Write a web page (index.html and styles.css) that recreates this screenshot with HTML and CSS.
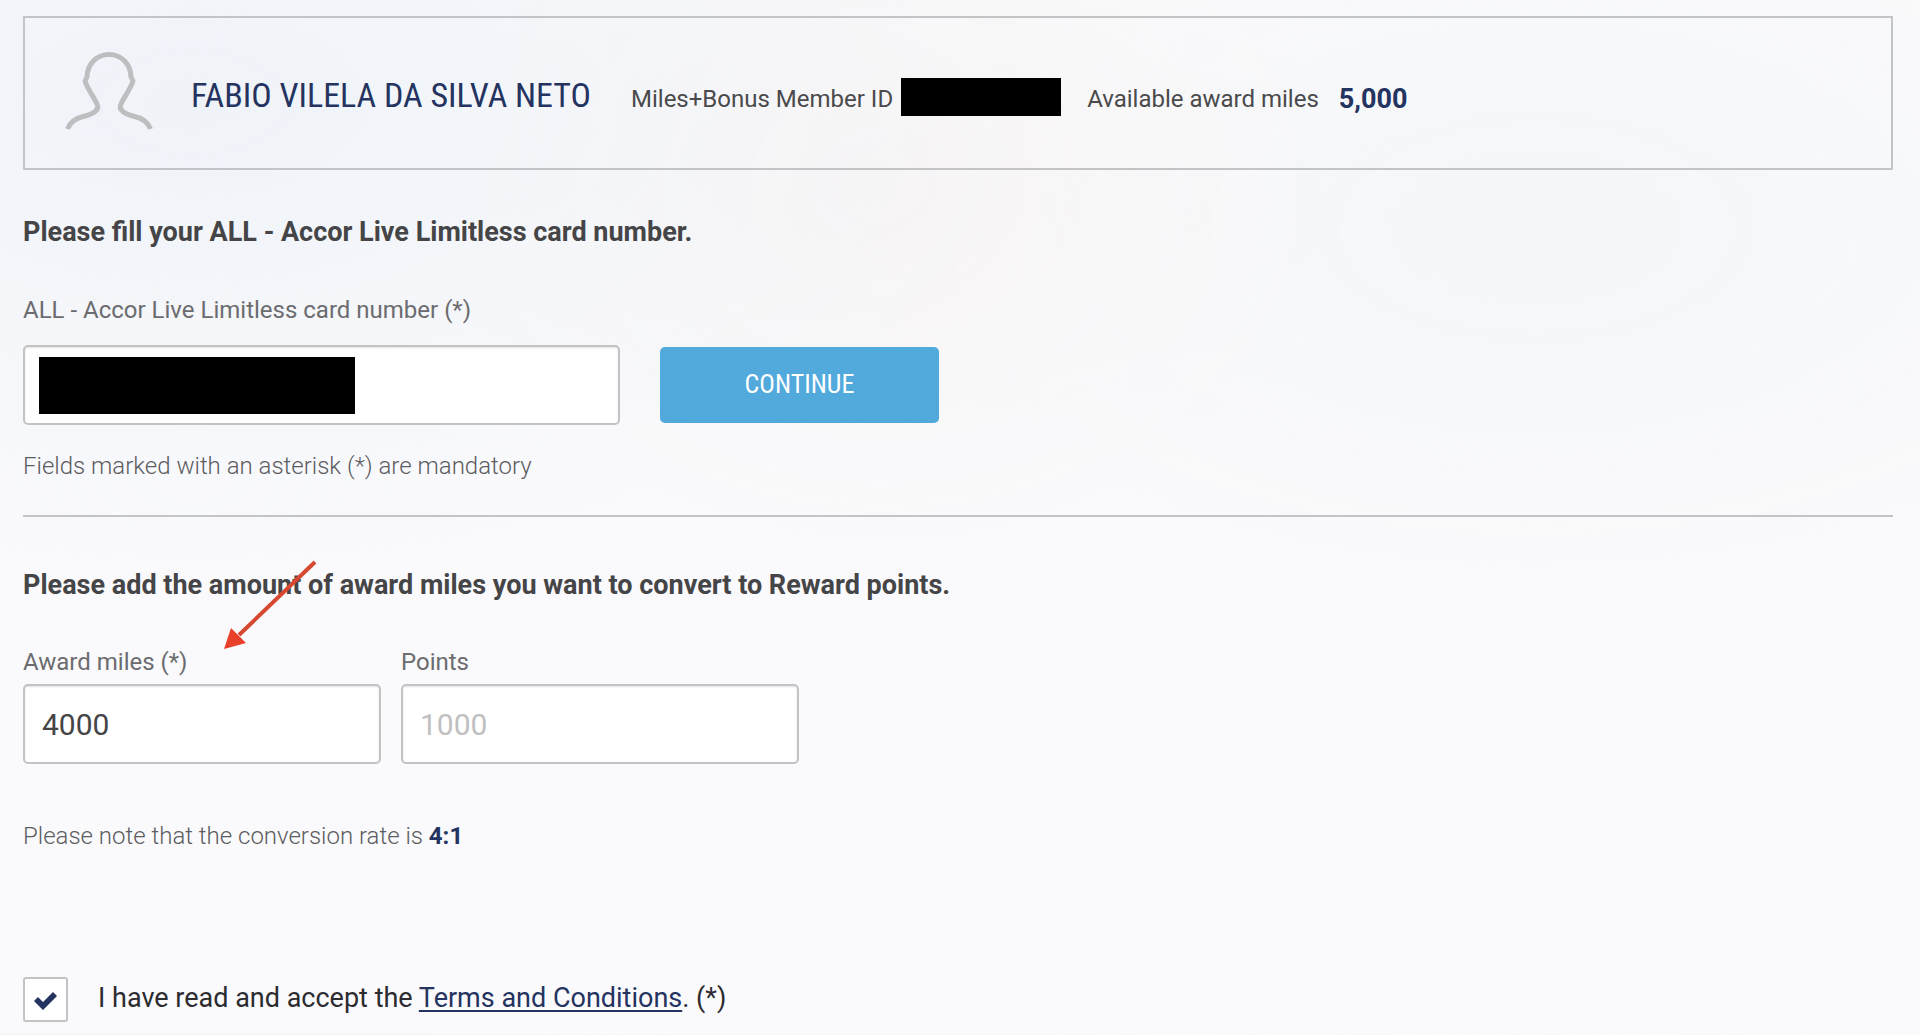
FILE: index.html
```html
<!DOCTYPE html>
<html lang="en">
<head>
    <meta charset="UTF-8">
    <meta name="viewport" content="width=device-width, initial-scale=1.0">
    <title>Convert award miles</title>
    <link rel="stylesheet" href="styles.css">
</head>
<body>
    <!-- Member info -->
    <header class="member-box">
        <svg class="avatar" viewBox="0 0 88 80" fill="none" stroke="#bdbebf" stroke-width="5" stroke-linejoin="round">
            <path d="M2.500 77C5 70 11 66 20 64C28 62 35 58 32 52C29 45 23 38 20 29L22 25C22 13 31 2.500 44 2.500C57 2.500 66 13 66 25L68 29C65 38 59 45 56 52C53 58 60 62 68 64C77 66 83 70 85.500 77"/>
        </svg>
        <h1 class="member-name">FABIO VILELA DA SILVA NETO</h1>
        <span class="member-label">Miles+Bonus Member ID</span>
        <span class="redacted-id"></span>
        <span class="member-label">Available award miles</span>
        <strong class="member-miles">5,000</strong>
    </header>

    <form>
        <!-- Card number -->
        <section class="card-section">
            <h2>Please fill your ALL - Accor Live Limitless card number.</h2>
            <label for="card_number">ALL - Accor Live Limitless card number (*)</label>
            <div class="card-row">
                <div class="card-field">
                    <input type="text" id="card_number">
                    <span class="redacted-card"></span>
                </div>
                <button type="button" class="btn-continue">CONTINUE</button>
            </div>
            <p class="note">Fields marked with an asterisk (*) are mandatory</p>
        </section>

        <!-- Miles conversion -->
        <section class="miles-section">
            <h2>Please add the amount of award miles you want to convert to Reward points.</h2>
            <svg class="arrow" viewBox="0 0 100 96">
                <path d="M95 6L19 79" stroke="#d64830" stroke-width="4"/>
                <path d="M4 93L11 72L26 87Z" fill="#e8402a"/>
            </svg>
            <div class="miles-row">
                <div class="field field-miles">
                    <label for="award_miles">Award miles (*)</label>
                    <input type="text" id="award_miles" value="4000">
                </div>
                <div class="field field-points">
                    <label for="points">Points</label>
                    <input type="text" id="points" placeholder="1000">
                </div>
            </div>
            <p class="note">Please note that the conversion rate is <strong>4:1</strong></p>
        </section>

        <!-- Terms -->
        <div class="terms">
            <span class="check-box">
                <input type="checkbox" id="terms" checked>
                <svg class="check-mark" viewBox="0 0 24 20">
                    <path d="M0 10L4 6L9 11L19 1L23 5L9 19Z" fill="#24335f"/>
                </svg>
            </span>
            <label for="terms">I have read and accept the <a href="#">Terms and Conditions</a>. (*)</label>
        </div>
    </form>
</body>
</html>
```
FILE: styles.css
```css
/* General styling */
* {
    box-sizing: border-box;
}

body {
    font-family: Roboto, "Liberation Sans", sans-serif;
    font-size: 24px;
    line-height: 32px;
    color: #4a4a4c;
    margin: 0;
    padding: 16px 27px 12px 23px;
    background-color: #fafafc;
    background-image:
        radial-gradient(ellipse at 10% 10%, #eff3f8 0, transparent 35%),
        radial-gradient(ellipse at 46% 18%, #f8f5f5 0, transparent 30%),
        radial-gradient(ellipse at 80% 22%, #f4f6f8 0, transparent 30%);
}

h1,
h2,
p {
    margin: 0;
}

h2 {
    font-size: 27px;
    font-weight: 700;
    color: #454547;
}

label {
    color: #6c6c6f;
}

input[type="text"] {
    display: block;
    width: 100%;
    height: 80px;
    padding: 0 17px;
    border: 2px solid #c3c3c5;
    border-radius: 5px;
    background-color: #fff;
    box-shadow: inset 0 1px 2px rgba(0, 0, 0, 0.12);
    font-family: inherit;
    font-size: 30px;
    color: #454547;
}

input::placeholder {
    color: #bfbfc1;
}

/* Member info */
.member-box {
    display: flex;
    align-items: center;
    height: 154px;
    padding-left: 40px;
    border: 2px solid #c3c4c7;
}

.avatar {
    width: 88px;
    height: 80px;
    margin: 0 38px 2px 0;
}

.member-name {
    padding-top: 4px;
    margin-right: 40px;
    font-family: "Roboto Condensed", "Liberation Sans Narrow", Roboto, sans-serif;
    font-size: 34px;
    font-weight: 400;
    color: #24335f;
}

.member-label {
    padding-top: 12px;
}

.redacted-id {
    width: 160px;
    height: 38px;
    margin: 8px 26px 0 8px;
    background-color: #000;
}

.member-miles {
    padding-top: 12px;
    margin-left: 20px;
    font-size: 27px;
    color: #24335f;
}

/* Card number */
.card-section {
    padding: 46px 0 33px;
    border-bottom: 2px solid #c3c4c7;
}

.card-section > label {
    display: block;
    margin-top: 46px;
}

.card-row {
    display: flex;
    align-items: center;
    gap: 40px;
    margin: 19px 0 25px;
}

.card-field {
    position: relative;
    width: 597px;
}

.redacted-card {
    position: absolute;
    top: 12px;
    left: 16px;
    width: 316px;
    height: 57px;
    background-color: #000;
}

.btn-continue {
    width: 279px;
    height: 76px;
    padding: 0 0 2px;
    border: 0;
    border-radius: 5px;
    background-color: #51a9dc;
    color: #fff;
    font-family: "Roboto Condensed", "Liberation Sans Narrow", Roboto, sans-serif;
    font-size: 26px;
    cursor: pointer;
}

.note {
    font-weight: 300;
    color: #5c5c5f;
}

.note strong {
    font-weight: 700;
    color: #24335f;
}

/* Miles conversion */
.miles-section {
    position: relative;
    padding-top: 52px;
}

.arrow {
    position: absolute;
    top: 39px;
    left: 197px;
    width: 100px;
    height: 96px;
}

.miles-row {
    display: flex;
    gap: 20px;
    margin: 45px 0 56px;
}

.field label {
    display: block;
    margin-bottom: 6px;
}

.field-miles {
    width: 358px;
}

.field-points {
    width: 398px;
}

/* Terms */
.terms {
    display: flex;
    align-items: center;
    gap: 30px;
    margin-top: 125px;
    font-size: 27px;
}

.terms label {
    padding-bottom: 4px;
    color: #2b2b30;
}

.terms a {
    color: #24335f;
    text-decoration-thickness: 2px;
    text-underline-offset: 3px;
}

.check-box {
    position: relative;
    width: 45px;
    height: 45px;
}

.check-box input {
    appearance: none;
    display: block;
    width: 100%;
    height: 100%;
    margin: 0;
    border: 2px solid #c3c3c5;
    border-radius: 3px;
    background-color: #fff;
}

.check-mark {
    position: absolute;
    top: 14px;
    left: 11px;
    width: 24px;
    height: 20px;
    pointer-events: none;
}
```
